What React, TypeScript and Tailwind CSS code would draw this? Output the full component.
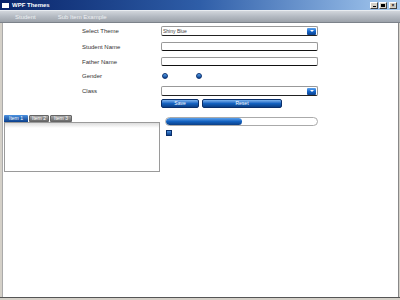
import React from "react"

const font = { fontFamily: '"Liberation Sans", "DejaVu Sans", sans-serif' }

function Label({ children }: { children: React.ReactNode }) {
  return <div className="w-[79px] text-[6px] leading-none text-[#333]">{children}</div>
}

function ArrowButton() {
  return (
    <div className="w-[9px] h-[7px] mr-[1px] rounded-[1px] bg-gradient-to-b from-[#5aa2ee] via-[#1565c8] to-[#0a3f8c] flex items-center justify-center">
      <div className="w-0 h-0 border-l-[2px] border-r-[2px] border-t-[2px] border-l-transparent border-r-transparent border-t-white" />
    </div>
  )
}

function Combo({ text }: { text?: string }) {
  return (
    <div className="w-[157px] h-[10px] bg-white border border-[#999] border-b-[#222] rounded-[2px] flex items-center justify-between">
      <span className="text-[5px] leading-none text-[#444] pl-[1px]">{text}</span>
      <ArrowButton />
    </div>
  )
}

function TextBox() {
  return <div className="w-[157px] h-[9px] bg-white border border-[#999] border-b-[#111] border-b-[1.5px] rounded-[2px]" />
}

function Radio() {
  return <div className="w-[6px] h-[6px] rounded-full bg-gradient-to-b from-[#5aa6f0] to-[#0a3f8c] border border-[#0a3070]" />
}

function BlueButton({ label, w }: { label: string; w: string }) {
  return (
    <div className={`${w} h-[9px] rounded-[2px] border border-[#0a2f6a] bg-gradient-to-b from-[#7db4ee] via-[#1462c0] to-[#0b3f86] flex items-center justify-center text-[5px] leading-none text-white`}>
      {label}
    </div>
  )
}

export default function App() {
  return (
    <div style={font} className="w-[400px] h-[300px] flex flex-col bg-white overflow-hidden">
      {/* title bar */}
      <div className="h-[10px] flex items-center bg-gradient-to-r from-[#0a246a] via-[#2f5ea8] to-[#a6caf0]">
        <div className="ml-[1px] w-[9px] h-[7px] bg-white border border-[#0a246a]" />
        <span className="ml-[2px] text-[6px] leading-none font-bold text-white">WPF Themes</span>
        <div className="ml-auto mr-[3px] flex gap-[1px]">
          <div className="w-[8px] h-[7px] bg-[#d4d0c8] border border-t-white border-l-white border-r-[#404040] border-b-[#404040] flex items-end justify-center pb-[1px]">
            <div className="w-[3px] h-[1px] bg-black" />
          </div>
          <div className="w-[8px] h-[7px] bg-[#d4d0c8] border border-t-white border-l-white border-r-[#404040] border-b-[#404040] flex items-center justify-center">
            <div className="w-[4px] h-[3px] border border-t-2 border-black" />
          </div>
          <div className="w-[8px] h-[7px] ml-[1px] bg-[#d4d0c8] border border-t-white border-l-white border-r-[#404040] border-b-[#404040] flex items-center justify-center text-[5px] leading-none font-bold text-black">
            ×
          </div>
        </div>
      </div>

      {/* menu bar */}
      <div className="h-[13px] flex items-center bg-gradient-to-b from-[#d2d6dc] via-[#b4bac2] to-[#9ca2aa] border-t border-[#e8ecf0] border-b border-b-[#7c828a] text-[6px] leading-none text-[#eef0f3]">
        <span className="ml-[15px]">Student</span>
        <span className="ml-[22px]">Sub Item Example</span>
      </div>

      <div className="flex-1 flex">
        <div className="w-[3px] bg-[#d4d0c8] border-r border-[#aaa]" />
        <div className="flex-1 flex flex-col">
          {/* form */}
          <div className="ml-[79px] mt-[3px] flex flex-col">
            <div className="h-[10px] flex items-center">
              <Label>Select Theme</Label>
              <Combo text="Shiny Blue" />
            </div>
            <div className="h-[9px] mt-[6px] flex items-center">
              <Label>Student Name</Label>
              <TextBox />
            </div>
            <div className="h-[9px] mt-[6px] flex items-center">
              <Label>Father Name</Label>
              <TextBox />
            </div>
            <div className="h-[10px] mt-[5px] flex items-center">
              <Label>Gender</Label>
              <div className="ml-[1px] flex gap-[28px]">
                <Radio />
                <Radio />
              </div>
            </div>
            <div className="h-[10px] mt-[5px] flex items-center">
              <Label>Class</Label>
              <Combo />
            </div>
            <div className="h-[9px] mt-[3px] flex items-center">
              <div className="w-[79px]" />
              <div className="flex gap-[3px]">
                <BlueButton label="Save" w="w-[38px]" />
                <BlueButton label="Reset" w="w-[80px]" />
              </div>
            </div>
          </div>

          {/* tabs + progress */}
          <div className="mt-[7px] flex">
            <div className="ml-[1px] w-[156px] flex flex-col">
              <div className="h-[7px] flex items-end gap-[1px] text-[5px] leading-none text-white">
                <div className="w-[24px] h-[7px] flex items-center justify-center rounded-t-[1px] bg-gradient-to-b from-[#4c92e0] to-[#0a3f8c]">Item 1</div>
                <div className="w-[20px] h-[7px] flex items-center justify-center rounded-t-[1px] bg-gradient-to-b from-[#aaa] to-[#6a6a6a] border border-[#666]">Item 2</div>
                <div className="w-[22px] h-[7px] flex items-center justify-center rounded-t-[1px] bg-gradient-to-b from-[#aaa] to-[#6a6a6a] border border-[#666]">Item 3</div>
              </div>
              <div className="h-[50px] border border-[#9a9a9a] bg-white flex flex-col">
                <div className="h-[5px] bg-gradient-to-b from-[#dcdcdc] to-white" />
              </div>
            </div>
            <div className="ml-[5px] mt-[2px] flex flex-col">
              <div className="w-[153px] h-[9px] rounded-full border border-[#aaa] bg-white overflow-hidden flex">
                <div className="w-[76px] h-full rounded-full bg-gradient-to-b from-[#5aa2ee] via-[#1462c0] to-[#0b3f86]" />
              </div>
              <div className="mt-[4px] ml-[1px] w-[6px] h-[6px] bg-gradient-to-b from-[#4c92e0] to-[#0a3f8c] border border-[#0a2f6a]" />
            </div>
          </div>
        </div>
        <div className="w-[2px] bg-[#d4d0c8] border-l border-[#888]" />
      </div>
      <div className="h-[3px] bg-[#d4d0c8] border-t border-[#555]" />
    </div>
  )
}
